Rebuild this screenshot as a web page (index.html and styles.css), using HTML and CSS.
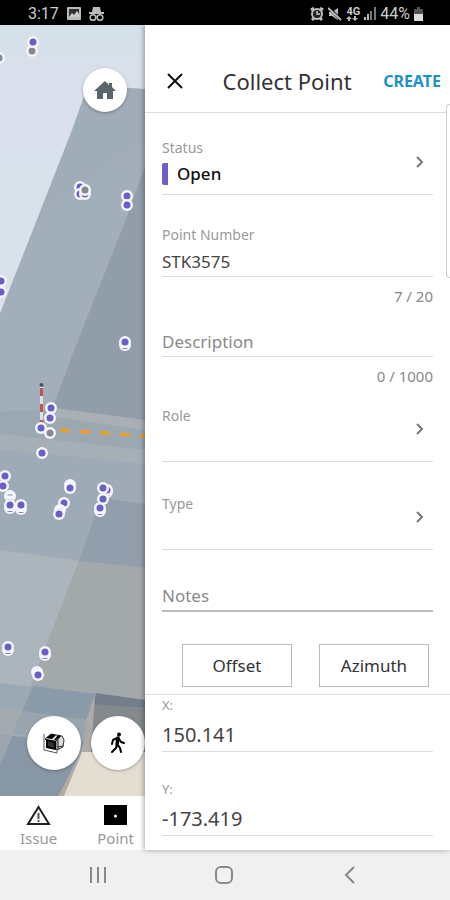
FILE: index.html
```html
<!DOCTYPE html>
<html lang="en">
<head>
  <meta charset="UTF-8" />
  <meta name="viewport" content="width=device-width, initial-scale=1.0"/>
  <title>Collect Point</title>
  <link rel="stylesheet" href="styles.css">
</head>
<body>

<header class="statusbar">
  <div class="status-group">
    <span>3:17</span>
    <svg width="14" height="14" viewBox="0 0 14 14"><rect width="14" height="13" rx="1" fill="#bbb"/><rect x="2" y="2" width="10" height="8" fill="#333"/><path d="M2 10l3-4 2 2 3-4 2 3v3z" fill="#ccc"/></svg>
    <svg width="15" height="14" viewBox="0 0 15 14"><path d="M4 0h7l1 5H3z" fill="#bbb"/><path d="M0 6h15" stroke="#bbb" stroke-width="2"/><path d="M6 10q1.500-1.500 3 0" fill="none" stroke="#bbb"/><circle cx="4" cy="10.500" r="2.800" fill="none" stroke="#bbb" stroke-width="1.500"/><circle cx="11" cy="10.500" r="2.800" fill="none" stroke="#bbb" stroke-width="1.500"/></svg>
  </div>
  <div class="status-group status-right">
    <svg width="14" height="14" viewBox="0 0 14 14"><path d="M1 3l3-2M10 1l3 2M2 13l2-2M12 13l-2-2" stroke="#bbb" stroke-width="3"/><circle cx="7" cy="7" r="5" fill="#222" stroke="#bbb" stroke-width="2"/><path d="M7 4v3h3" stroke="#ccc" stroke-width="1.500" fill="none"/></svg>
    <svg width="14" height="14" viewBox="0 0 14 14"><path d="M1 5h3l6-4v12l-6-4H1z" fill="#bbb"/><path d="M1 1l12 12" stroke="#000" stroke-width="3"/><path d="M0 1l13 12" stroke="#bbb" stroke-width="2"/></svg>
    <span class="network">4G<svg width="12" height="5" viewBox="0 0 12 5"><path d="M0 3l3-3 3 3H4v2H2V3zM6 2h2V0h2v2h2L9 5z" fill="#bbb"/></svg></span>
    <svg width="12" height="13" viewBox="0 0 12 13"><path d="M0 10h2v3H0zM3 7h2v6H3z" fill="#bbb"/><path d="M6 4h2v9H6zM10 0h2v13h-2z" fill="#777"/></svg>
    <span>44%</span>
    <svg width="9" height="14" viewBox="0 0 9 14"><path d="M3 0h3v2h3v5H0V2h3z" fill="#555"/><path d="M0 7h9v7H0z" fill="#ddd"/></svg>
  </div>
</header>

<div class="app">
  <aside class="viewer">
    <div class="map">
      <svg class="scene" viewBox="0 25 145 771" preserveAspectRatio="xMidYMid slice">
        <defs>
          <linearGradient id="sky" x1="0" y1="0" x2="0" y2="1">
            <stop offset="0" stop-color="#d3e1e8"/>
            <stop offset="0.060" stop-color="#d9e0ec"/>
            <stop offset="0.150" stop-color="#dae1ed"/>
            <stop offset="0.220" stop-color="#d6e2ea"/>
            <stop offset="0.400" stop-color="#dae1ec"/>
          </linearGradient>
          <g id="pt"><circle r="6" fill="#f4f4fc"/><circle r="3.500" fill="#6a5fc4"/></g>
          <g id="ptGray"><circle r="6" fill="#f4f4fc"/><circle r="3.500" fill="#858990"/></g>
          <g id="ring"><circle r="6" fill="#f4f4fc"/><path d="M-2.500 -1h5M-2.500 3.500h5" stroke="#8f87ce"/></g>
        </defs>
        <rect y="25" width="145" height="771" fill="url(#sky)"/>
        <path d="M88 85L145 89V796H0V314L72 130z" fill="#a0acb7"/>
        <path d="M145 139L44 210 16 273 0 314V470H145z" fill="#a2aeb9"/>
        <path d="M145 166L127 217 73 353 52 410 145 424z" fill="#929daa"/>
        <path d="M0 412L53 409 145 422V456L0 438z" fill="#9ba8b2"/>
        <path d="M55 408L145 420V430L55 417z" fill="#a8b0b6"/>
        <path d="M0 434L145 450V464L0 449z" fill="#a6afb5"/>
        <path d="M0 449L145 464V568L0 552z" fill="#9eabb7"/>
        <path d="M101 498L145 504V568L79 561z" fill="#929eab"/>
        <path d="M0 550L79 561 30 688 0 684z" fill="#adb5bc"/>
        <path d="M79 561L145 568V700L30 688z" fill="#a3a8aa"/>
        <path d="M0 683L33 687 22 711 0 709z" fill="#9ba9b5"/>
        <path d="M33 686L96 694 86 720 22 711z" fill="#8b9aa9"/>
        <path d="M0 709L86 720 80 755 0 736z" fill="#a4abae"/>
        <path d="M22 711L86 720 84 742 12 734z" fill="#98a4ae"/>
        <path d="M0 735L84 742 60 796H0z" fill="#8897a6"/>
        <path d="M13 735L0 765V735z" fill="#9aa5ae"/>
        <path d="M96 693L145 700V708L93 706z" fill="#747d8b"/>
        <path d="M94 704L145 708V756H82z" fill="#83898c"/>
        <path d="M91 704L95 696 91 752H82z" fill="#afaaa4"/>
        <path d="M82 752H145V796H61z" fill="#e4ddd1"/>
        <path d="M82 752L58 796H64z" fill="#b3aca5"/>
        <path d="M60 430L145 436" stroke="#dfa238" stroke-width="4" stroke-dasharray="10 10"/>
        <path d="M41.500 386V424" stroke="#dde1e4" stroke-width="3"/>
        <path d="M41.500 388V424" stroke="#bd5555" stroke-width="3" stroke-dasharray="8 8"/>
        <circle cx="41.500" cy="385" r="2" fill="#4b5158"/>
        <use href="#ptGray" x="32" y="51"/><use href="#pt" x="33" y="42"/><use href="#ptGray" x="-1" y="58"/>
        <use href="#pt" x="80" y="187"/><use href="#pt" x="80" y="194"/><use href="#pt" x="85" y="194"/><use href="#ptGray" x="85" y="190"/>
        <use href="#pt" x="127" y="196"/><use href="#pt" x="127" y="205"/>
        <use href="#pt" x="1" y="281"/><use href="#pt" x="1" y="292"/>
        <use href="#ring" x="125" y="345"/><use href="#pt" x="125" y="342"/>
        <use href="#pt" x="51" y="408"/><use href="#pt" x="50" y="418"/><use href="#ptGray" x="50" y="433"/><use href="#pt" x="41" y="428"/><use href="#pt" x="42" y="453"/>
        <use href="#pt" x="5" y="476"/><use href="#pt" x="3" y="486"/><use href="#ring" x="10" y="496"/><use href="#ring" x="10" y="508"/><use href="#pt" x="10" y="505"/><use href="#ring" x="21" y="509"/><use href="#pt" x="21" y="505"/>
        <use href="#ring" x="70" y="485"/><use href="#pt" x="70" y="488"/><use href="#pt" x="64" y="503"/><use href="#ring" x="60" y="510"/><use href="#pt" x="59" y="514"/>
        <use href="#ring" x="107" y="492"/><use href="#pt" x="107" y="490"/><use href="#pt" x="103" y="488"/><use href="#pt" x="103" y="499"/><use href="#ring" x="100" y="511"/><use href="#pt" x="100" y="508"/>
        <use href="#ring" x="8" y="650"/><use href="#pt" x="8" y="647"/><use href="#ring" x="45" y="655"/><use href="#pt" x="45" y="652"/><use href="#ring" x="37" y="672"/><use href="#pt" x="38" y="675"/>
      </svg>
      <button class="fab fab-home" aria-label="Home">
        <svg width="22" height="20" viewBox="0 0 22 20"><path d="M11 1L0 11h3v8h6v-6h4v6h6v-8h3l-4-4V3h-3v2z" fill="#59656b"/></svg>
      </button>
      <div class="map-tools">
        <button class="fab" aria-label="Section box">
          <svg width="22" height="22" viewBox="0 0 22 22"><path d="M2 7l6-5 11 2 2 4-1 7-6 3z" fill="#ddd" stroke="#333"/><path d="M8 2l5 1-4 4-6-1zM15 3l3 1-4 5-3-1z" fill="#000"/><path d="M15 8v10M15 15l5-1" stroke="#222"/><path d="M1 2v16l13 3V6" fill="none" stroke="#555"/><path d="M3 7l10 2v9L3 16z" fill="#000"/><path d="M5 9l6 2v5l-6-2z" fill="#333"/></svg>
        </button>
        <button class="fab" aria-label="Walk">
          <svg width="16" height="22" viewBox="0 0 16 22" fill="none" stroke="#000" stroke-linecap="round" stroke-linejoin="round"><circle cx="9" cy="2.500" r="2" fill="#000" stroke="none"/><path d="M8 6l-1 7" stroke-width="3.500"/><path d="M7 6L3 8l-1 4M9 7l2 3 3 1M7 13l-1 3-4 4M8 13l2 3 1 4" stroke-width="2"/></svg>
        </button>
      </div>
    </div>
    <nav class="tabs">
      <button class="tab">
        <svg width="25" height="21" viewBox="0 0 25 21"><path d="M12.500 2L23 19H2z" fill="#fff" stroke="#222" stroke-width="2"/><path d="M12.500 8v6M12.500 15v2" stroke="#555" stroke-width="2"/></svg>
        <span>Issue</span>
      </button>
      <button class="tab">
        <svg width="25" height="21" viewBox="0 0 25 21"><path d="M1 0h23v20H1z"/><circle cx="12.500" cy="11" r="1.500" fill="#fff"/></svg>
        <span>Point</span>
      </button>
    </nav>
  </aside>

  <main class="panel">
    <div class="panel-header">
      <button class="close" aria-label="Close">
        <svg width="16" height="16" viewBox="0 0 16 16"><path d="M1 1l14 14M15 1L1 15" stroke="#111" stroke-width="2"/></svg>
      </button>
      <h1>Collect Point</h1>
      <button class="create" type="submit" form="pointForm">CREATE</button>
    </div>
    <div class="scroll-edge"></div>

    <form id="pointForm">
      <div class="fields">
        <button type="button" class="picker status">
          <span class="picker-text">
            <span class="label">Status</span>
            <span class="status-value">Open</span>
          </span>
          <svg class="chevron" width="9" height="14" viewBox="0 0 9 14"><path d="M1 2l5 5-5 5"/></svg>
        </button>

        <div class="field">
          <label class="label" for="number">Point Number</label>
          <input type="text" id="number" name="number" value="STK3575" maxlength="20" />
        </div>
        <div class="counter">7 / 20</div>

        <input type="text" class="description" id="description" name="description" placeholder="Description" aria-label="Description" maxlength="1000" />
        <div class="counter">0 / 1000</div>

        <button type="button" class="picker role">
          <span class="picker-text"><span class="label">Role</span></span>
          <svg class="chevron" width="9" height="14" viewBox="0 0 9 14"><path d="M1 2l5 5-5 5"/></svg>
        </button>
        <button type="button" class="picker type">
          <span class="picker-text"><span class="label">Type</span></span>
          <svg class="chevron" width="9" height="14" viewBox="0 0 9 14"><path d="M1 2l5 5-5 5"/></svg>
        </button>

        <input type="text" class="notes" id="notes" name="notes" placeholder="Notes" aria-label="Notes" />

        <div class="actions">
          <button type="button">Offset</button>
          <button type="button">Azimuth</button>
        </div>
      </div>

      <div class="coords">
        <div class="coord">
          <label for="x">X:</label>
          <input type="text" id="x" name="x" value="150.141" />
        </div>
        <div class="coord">
          <label for="y">Y:</label>
          <input type="text" id="y" name="y" value="-173.419" />
        </div>
      </div>
    </form>
  </main>
</div>

<nav class="navbar">
  <button aria-label="Recent apps"><svg width="18" height="18" viewBox="0 0 18 18"><path d="M2 1v16M9 1v16M16 1v16"/></svg></button>
  <button aria-label="Home screen"><svg width="18" height="18" viewBox="0 0 18 18"><rect x="1" y="1" width="16" height="16" rx="5"/></svg></button>
  <button aria-label="Back"><svg width="18" height="18" viewBox="0 0 18 18"><path d="M13 1L5 9l8 8"/></svg></button>
</nav>

</body>
</html>
```
FILE: styles.css
```css
* { box-sizing: border-box; }
body {
  margin: 0; min-height: 100vh; display: flex; flex-direction: column;
  font-family: "Noto Sans", sans-serif; color: #333; background: #fff;
}
button {
  font-family: inherit; color: inherit; background: none;
  border: none; padding: 0; cursor: pointer;
}
svg { display: block; flex: none; }

.statusbar {
  display: flex; justify-content: space-between; align-items: center;
  height: 25px; padding: 2px 27px 0 28px;
  background: #000; color: #ccc; font: 16px/20px Roboto, sans-serif;
}
.status-group { display: flex; align-items: center; gap: 8px; }
.status-right { gap: 4px; }
.network { font-size: 11px; line-height: 9px; font-weight: bold; }

.app { flex: 1; display: grid; grid-template-columns: 29fr 61fr; }

.viewer { display: flex; flex-direction: column; min-width: 0; }
.map { position: relative; flex: 1; overflow: hidden; }
.scene { position: absolute; width: 100%; height: 100%; }
.fab {
  display: flex; align-items: center; justify-content: center;
  width: 54px; height: 54px; border-radius: 50%; background: #fff;
  box-shadow: 0 1px 3px rgba(0, 0, 0, 0.3);
}
.fab-home { position: absolute; top: 43px; right: 18px; width: 44px; height: 44px; }
.map-tools { position: absolute; right: 0; bottom: 26px; display: flex; gap: 10px; }
.tabs { display: flex; justify-content: space-between; height: 54px; padding: 9px 11px 0 20px; }
.tab {
  display: flex; flex-direction: column; align-items: center; gap: 2px;
  font-size: 15px; line-height: 20px; color: #999;
}

.panel {
  position: relative; min-width: 0; background: #fff;
  box-shadow: -1px 0 5px rgba(0, 0, 0, 0.35);
}
.panel-header {
  display: flex; align-items: center; justify-content: space-between;
  height: 88px; padding: 24px 9px 0 22px; border-bottom: 1px solid #ddd;
}
.panel-header h1 { margin: 0; font-size: 22px; line-height: 28px; font-weight: normal; }
.close { width: 24px; }
.create { color: #1d91c9; font-size: 16px; font-weight: bold; }
.scroll-edge {
  position: absolute; top: 79px; right: 0; width: 4px; height: 174px;
  background: #fff; border: 1px solid #ccc; border-right: none; border-radius: 4px 0 0 4px;
}

.fields { display: flex; flex-direction: column; padding: 0 17px 7px; border-bottom: 1px solid #ddd; }
.label { font-size: 14px; line-height: 20px; color: #999; }
input {
  display: block; width: 100%; height: 28px; padding: 0 0 2px;
  border: none; border-bottom: 1px solid #ddd; border-radius: 0; outline: none;
  background: none; font-family: inherit; font-size: 17px; color: #444;
}
input::placeholder { color: #8a8a8a; opacity: 1; }
.picker {
  display: flex; align-items: center; justify-content: space-between;
  padding: 0 8px 9px 0; border-bottom: 1px solid #ddd; text-align: left;
}
.picker-text { display: flex; flex-direction: column; gap: 5px; min-height: 46px; }
.chevron { fill: none; stroke: #777; stroke-width: 2; }
.status { margin-top: 25px; }
.status-value {
  padding-left: 9px; border-left: 6px solid #6d60c4; border-radius: 2px;
  font-size: 17px; line-height: 22px; font-weight: 500; color: #111;
}
.field { display: flex; flex-direction: column; gap: 4px; margin-top: 30px; }
.counter { margin-top: 9px; font-size: 15px; line-height: 20px; color: #888; text-align: right; }
.description { margin-top: 23px; }
.role { margin-top: 20px; }
.type { margin-top: 32px; }
.notes { margin-top: 33px; height: 29px; border-bottom: 2px solid #bbb; }
.actions { display: flex; gap: 27px; margin-top: 32px; padding: 0 4px 0 20px; }
.actions button {
  flex: 1; height: 43px; border: 1px solid #bbb; font-size: 17px; color: #333;
}

.coords { display: flex; flex-direction: column; gap: 27px; padding: 0 17px 13px; }
.coord { display: flex; flex-direction: column; gap: 4px; }
.coord label { font-size: 13px; line-height: 20px; color: #999; }
.coord input { height: 33px; font-size: 20px; }

.navbar {
  display: flex; justify-content: space-around; align-items: center;
  height: 50px; padding: 0 37px 0 35px; background: #f0f0f0;
}
.navbar svg { fill: none; stroke: #888; stroke-width: 2; }
```
